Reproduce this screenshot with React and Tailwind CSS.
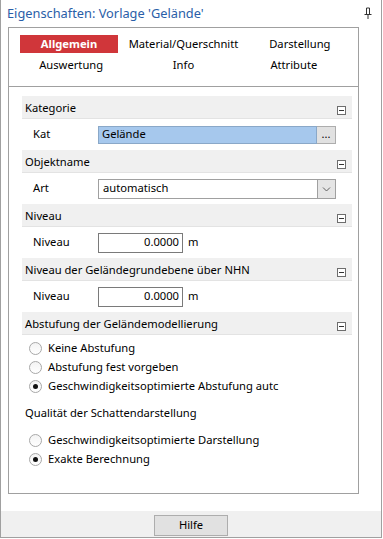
import React from 'react';

const font = { fontFamily: '"Noto Sans", "Open Sans", sans-serif' };

const Collapse = () => (
  <div className="w-[9px] h-[9px] border border-[#6d6d6d] bg-white flex items-center justify-center self-end mb-[3px] mr-[6px]">
    <div className="w-[5px] h-px bg-[#333]" />
  </div>
);

const Header = ({ title }) => (
  <div className="h-[23px] bg-[#f0f0f0] border-b border-[#e3e3e3] flex justify-between pl-[3px]">
    <span className="leading-[23px]">{title}</span>
    <Collapse />
  </div>
);

const Row = ({ label, children }) => (
  <div className="h-[31px] flex items-center">
    <span className="w-[76px] pl-[11px]">{label}</span>
    {children}
  </div>
);

const Radio = ({ label, checked }) => (
  <div className="h-[19px] flex items-center pl-[7px]">
    <div className="w-[13px] h-[13px] rounded-full border border-[#a8a8a8] bg-gradient-to-b from-[#f3f3f3] to-white flex items-center justify-center shrink-0">
      {checked && <div className="w-[5px] h-[5px] rounded-full bg-[#111]" />}
    </div>
    <span className="ml-[6px] whitespace-nowrap">{label}</span>
  </div>
);

const NumField = () => (
  <>
    <div className="w-[85px] h-[20px] border border-[#7a7a7a] bg-white flex items-center justify-end pr-[3px]">0.0000</div>
    <span className="ml-[5px]">m</span>
  </>
);

export default function App() {
  return (
    <div className="w-[383px] h-[539px] bg-white text-[11.2px] text-[#000]" style={font}>
      <div className="w-[382px] h-[538px] border-x border-b border-[#a0a0a0] flex flex-col">
        <div className="h-[27px] flex items-center justify-between pl-[6px] pr-[9px]">
          <span className="text-[12.8px] text-[#2a5ea8]">Eigenschaften: Vorlage 'Gelände'</span>
          <svg width="8" height="12" viewBox="0 0 8 12" className="mb-[2px]">
            <path d="M0.5 7.5h7M2.5 7.5V1M5.5 7.5V1M2.5 1h3M4 7.5V12" stroke="#333" strokeWidth="1" fill="none" />
          </svg>
        </div>
        <div className="ml-[7px] w-[351px] h-[467px] border border-[#a0a0a0] flex flex-col">
          <div className="h-[58px] grid grid-cols-3 grid-rows-[repeat(2,19px)] pt-[7px] gap-y-[2px]">
            <div className="ml-[11px] w-[98px] h-[18px] bg-[#d0363a] text-white font-bold flex items-center justify-center">Allgemein</div>
            <div className="flex items-center justify-center">Material/Querschnitt</div>
            <div className="flex items-center justify-center">Darstellung</div>
            <div className="flex items-center justify-center pl-[8px]">Auswertung</div>
            <div className="flex items-center justify-center">Info</div>
            <div className="flex items-center justify-center pr-[12px]">Attribute</div>
          </div>
          <div className="flex-1 border-t border-[#a0a0a0] pt-[9px] pl-[13px] pr-[6px] flex flex-col">
            <Header title="Kategorie" />
            <Row label="Kat">
              <div className="flex h-[18px] w-[238px]">
                <div className="flex-1 bg-[#a6c8ed] border border-[#8aa8c8] pl-[3px] flex items-center">Gelände</div>
                <div className="w-[19px] bg-[#e1e1e1] border border-l-0 border-[#adadad] flex items-center justify-center text-[11px] leading-none pb-[3px]">...</div>
              </div>
            </Row>
            <Header title="Objektname" />
            <Row label="Art">
              <div className="flex h-[20px] w-[238px] border border-[#a0a0a0]">
                <div className="flex-1 bg-white pl-[4px] flex items-center">automatisch</div>
                <div className="w-[18px] bg-[#e5e5e5] border-l border-[#a0a0a0] flex items-center justify-center">
                  <svg width="9" height="6" viewBox="0 0 9 6">
                    <path d="M1 1.5l3.5 3.5L8 1.5" stroke="#606060" strokeWidth="1" fill="none" />
                  </svg>
                </div>
              </div>
            </Row>
            <Header title="Niveau" />
            <Row label="Niveau">
              <NumField />
            </Row>
            <Header title="Niveau der Geländegrundebene über NHN" />
            <Row label="Niveau">
              <NumField />
            </Row>
            <Header title="Abstufung der Geländemodellierung" />
            <div className="pt-[4px]">
              <Radio label="Keine Abstufung" />
              <Radio label="Abstufung fest vorgeben" />
              <Radio label="Geschwindigkeitsoptimierte Abstufung autc" checked />
            </div>
            <div className="h-[19px] mt-[8px] pl-[3px] flex items-center">Qualität der Schattendarstellung</div>
            <div className="pt-[8px]">
              <Radio label="Geschwindigkeitsoptimierte Darstellung" />
              <Radio label="Exakte Berechnung" checked />
            </div>
          </div>
        </div>
        <div className="h-[17px]" />
        <div className="flex-1 bg-[#f0f0f0] flex justify-center pt-[4px]">
          <div className="w-[74px] h-[21px] bg-[#e1e1e1] border border-[#adadad] flex items-center justify-center">Hilfe</div>
        </div>
      </div>
    </div>
  );
}
